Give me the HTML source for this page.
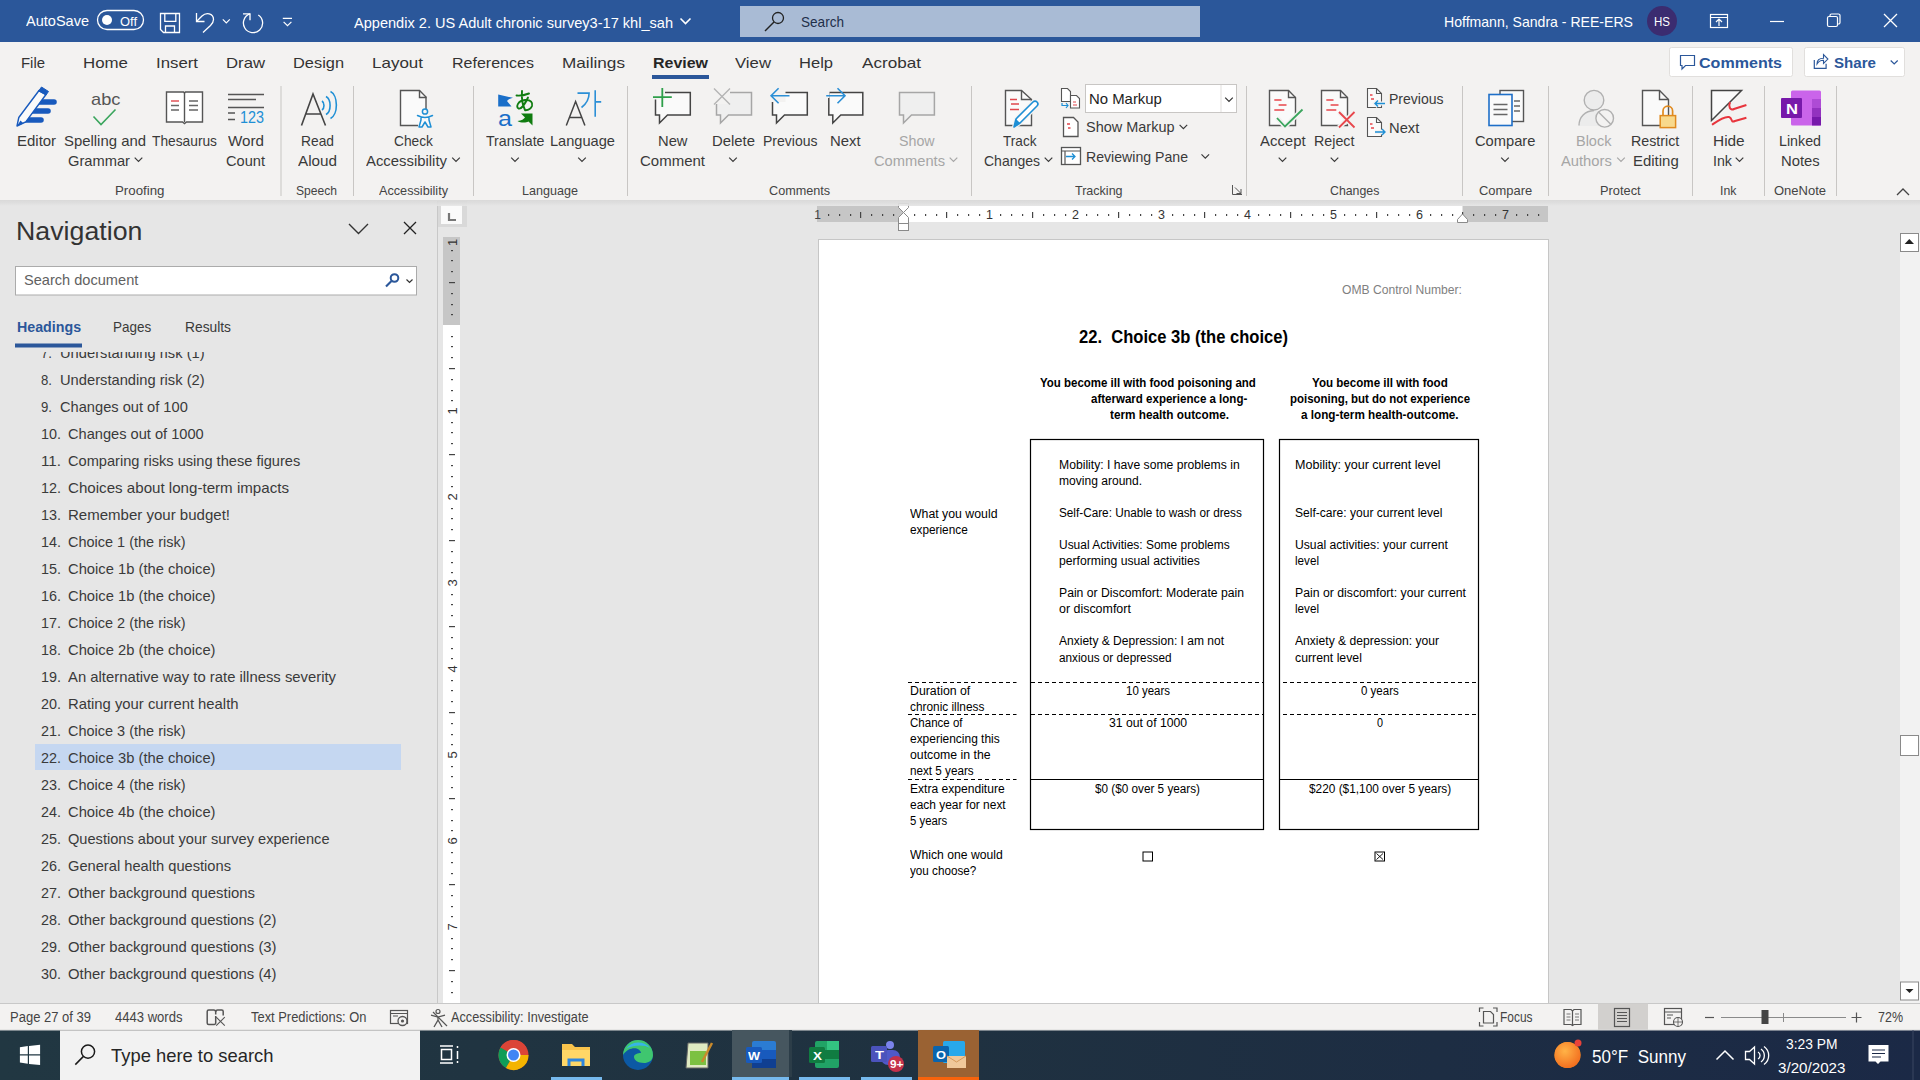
<!DOCTYPE html>
<html><head><meta charset="utf-8"><title>Word</title>
<style>
*{margin:0;padding:0}html,body{width:1920px;height:1080px;overflow:hidden;background:#e6e6e6}
.t{position:absolute;white-space:pre;line-height:1;transform-origin:0 0;font-family:"Liberation Sans",sans-serif}
svg.pg{position:absolute;left:0;top:0}
</style></head><body>
<svg class="pg" width="1920" height="1080" viewBox="0 0 1920 1080" shape-rendering="geometricPrecision">
<rect x="0" y="0" width="1920" height="43" fill="#2b579a"/>
<rect x="0" y="42" width="1920" height="160" fill="#f3f2f1"/>
<rect x="0" y="202" width="1920" height="801" fill="#e6e6e6"/>
<defs><linearGradient id="shd" x1="0" y1="0" x2="0" y2="1"><stop offset="0" stop-color="#d6d6d6"/><stop offset="1" stop-color="#e6e6e6"/></linearGradient></defs>
<rect x="97.5" y="10.5" width="46" height="19" rx="9.5" fill="none" stroke="#fff" stroke-width="1.3"/>
<circle cx="107" cy="20" r="5" fill="#fff"/>
<path d="M160.5 13.5 h19 v19 h-16 l-3 -3 z" fill="none" stroke="#fff" stroke-width="1.3"/>
<path d="M164.8 13.5 v7.8 h11 v-7.8 M165.5 32.5 v-6.5 h9 v6.5" fill="none" stroke="#fff" stroke-width="1.3"/>
<path d="M196.5 13 v8.5 h8" fill="none" stroke="#fff" stroke-width="1.3"/>
<path d="M197 21 L202 16 C206 12,213.5 13,213.5 19.5 C213.5 22,212 24,210.5 25.5 L203 32.5" fill="none" stroke="#fff" stroke-width="1.3"/>
<path d="M222.8 19.3 l3.5 3.5 l3.5 -3.5" fill="none" stroke="#fff" stroke-width="1.2"/>
<path d="M250 13.9 A9.6 9.6 0 1 0 258.3 15" fill="none" stroke="#fff" stroke-width="1.3"/>
<path d="M243 13.8 h7 v6.5" fill="none" stroke="#fff" stroke-width="1.3"/>
<path d="M282.8 18.4 h9.2 M283.6 21.8 l3.9 3.9 l3.9 -3.9" fill="none" stroke="#fff" stroke-width="1.2"/>
<path d="M680.5 18.5 l5 5 l5 -5" fill="none" stroke="#fff" stroke-width="1.6"/>
<rect x="740" y="6" width="460" height="31" fill="#a9bbd5"/>
<circle cx="778" cy="18" r="5.5" fill="none" stroke="#222" stroke-width="1.3"/>
<path d="M774 22 L765 31" stroke="#222" stroke-width="1.4"/>
<circle cx="1662" cy="21" r="15" fill="#3b2c70"/>
<rect x="1710.5" y="14.5" width="17" height="13" fill="none" stroke="#fff" stroke-width="1.2"/>
<path d="M1710.5 17.5 h17 M1719 26 v-7 M1716 22 l3 -3 l3 3" fill="none" stroke="#fff" stroke-width="1.2"/>
<path d="M1770 21.5 h14" stroke="#fff" stroke-width="1.2"/>
<rect x="1827.5" y="16.5" width="10" height="10" rx="1.5" fill="none" stroke="#fff" stroke-width="1.2"/>
<path d="M1830 16.5 v-1 a1.5 1.5 0 0 1 1.5 -1.5 h7 a1.5 1.5 0 0 1 1.5 1.5 v7 a1.5 1.5 0 0 1 -1.5 1.5 h-1" fill="none" stroke="#fff" stroke-width="1.2"/>
<path d="M1884 14 L1897 27 M1897 14 L1884 27" stroke="#fff" stroke-width="1.3"/>
<rect x="652" y="75" width="57" height="4" fill="#2b579a"/>
<rect x="1669.5" y="47.5" width="123" height="29" rx="2" fill="#fff" stroke="#e1dfdd"/>
<path d="M1680.5 55.5 h14 v10 h-9 l-3.5 3.5 v-3.5 h-1.5 z" fill="none" stroke="#2b579a" stroke-width="1.2"/>
<rect x="1804.5" y="47.5" width="100" height="29" rx="2" fill="#fff" stroke="#e1dfdd"/>
<path d="M1814.3 60 v8.4 h11.8 v-4.6" fill="none" stroke="#2b579a" stroke-width="1.2"/>
<path d="M1817 64 C1817 60.5,1819.5 58.3,1823.5 58.3 v-3.6 l4.4 4.4 l-4.4 4.4 v-3.2 C1820.5 60.3,1818.5 61.5,1817 64 z" fill="none" stroke="#2b579a" stroke-width="1.1"/>
<path d="M1890.7 60.5 l3.5 3.5 l3.5 -3.5" fill="none" stroke="#2b579a" stroke-width="1.2"/>
<rect x="280.5" y="86" width="1" height="110" fill="#c8c6c4"/>
<rect x="353.0" y="86" width="1" height="110" fill="#c8c6c4"/>
<rect x="473.0" y="86" width="1" height="110" fill="#c8c6c4"/>
<rect x="627.0" y="86" width="1" height="110" fill="#c8c6c4"/>
<rect x="971.0" y="86" width="1" height="110" fill="#c8c6c4"/>
<rect x="1246.0" y="86" width="1" height="110" fill="#c8c6c4"/>
<rect x="1462.0" y="86" width="1" height="110" fill="#c8c6c4"/>
<rect x="1548.0" y="86" width="1" height="110" fill="#c8c6c4"/>
<rect x="1692.0" y="86" width="1" height="110" fill="#c8c6c4"/>
<rect x="1764.0" y="86" width="1" height="110" fill="#c8c6c4"/>
<rect x="1836.0" y="86" width="1" height="110" fill="#c8c6c4"/>
<path d="M134.7 157.7 l3.8 3.8 l3.8 -3.8" fill="none" stroke="#3a3a3a" stroke-width="1.2"/>
<path d="M37 102 h17 M30.5 111 h17.5 M24 120 h17" stroke="#185abd" stroke-width="5.6" stroke-linecap="round"/>
<path d="M17 126 L18.8 117.5 L39 90.5 L46 94.5 L25.8 121.8 Z" fill="#fafafa" stroke="#185abd" stroke-width="1.4" stroke-linejoin="round"/>
<path d="M38.6 91 L41.5 87 L48.5 91.5 L46 95 Z" fill="#185abd" stroke="#185abd" stroke-width="1" stroke-linejoin="round"/>
<path d="M17 126 L20.5 120.5 L23.5 123.5 Z" fill="#185abd"/>
<path d="M93.5 116.5 L101 124.5 L115.5 109.5" fill="none" stroke="#3aa55d" stroke-width="1.6"/>
<path d="M166.5 92 h17 l1 1 l1 -1 h17 v30 h-16 l-2 1.5 l-2 -1.5 h-16 z" fill="#fff" stroke="#555" stroke-width="1.4"/>
<path d="M184.5 93 v29" stroke="#555" stroke-width="1.4"/>
<path d="M171 101 h8" stroke="#e0474c" stroke-width="1.4"/>
<path d="M171 105.5 h8 M171 110 h8 M189 101 h9 M189 105.5 h9 M189 110 h9" stroke="#666" stroke-width="1.4"/>
<path d="M228 94.5 h36 M228 99.5 h28 M228 107.5 h36 M228 113 h7 M228 119.5 h7" stroke="#555" stroke-width="1.4"/>
<path d="M301.5 125.5 L313 94 L325.5 125.5 M305.5 114 h15.5" fill="none" stroke="#444" stroke-width="1.6"/>
<path d="M322 101 a3.5 5 0 0 1 0 9 M326 96.5 a6 9.5 0 0 1 0 18 M330.5 91.5 a8 14 0 0 1 0 27" fill="none" stroke="#1e8fd5" stroke-width="1.6"/>
<path d="M452.2 157.7 l3.8 3.8 l3.8 -3.8" fill="none" stroke="#3a3a3a" stroke-width="1.2"/>
<path d="M418 125.5 h-17.5 v-35 h19 l6.5 6.5 v12" fill="#fafafa" stroke="#555" stroke-width="1.4"/>
<path d="M419.5 90.5 v7 h7" fill="none" stroke="#555" stroke-width="1.4"/>
<circle cx="425" cy="111.5" r="2.6" fill="none" stroke="#1e8fd5" stroke-width="1.5"/>
<path d="M417.5 115.5 c2 1 5 2 7.5 2 c2.5 0 5.5 -1 7.5 -2 M421 117 v3 l-2 7 h3 l3 -5 l3 5 h3 l-2 -7 v-3" fill="#fafafa" stroke="#1e8fd5" stroke-width="1.5" stroke-linejoin="round" stroke-linecap="round"/>
<path d="M511.2 157.7 l3.8 3.8 l3.8 -3.8" fill="none" stroke="#3a3a3a" stroke-width="1.2"/>
<path d="M578.2 157.7 l3.8 3.8 l3.8 -3.8" fill="none" stroke="#3a3a3a" stroke-width="1.2"/>
<path d="M498.2 94.5 L513 97.8 C510 98.5 508 99.5 507 101 L511.5 106.6 H498.2 Z" fill="#1a6fc9"/>
<path d="M516.5 95.5 C520 96 525 95 529 93.5 M522 91 C521.5 97 522 104 525 110 M528 97.5 C525 104 521 109.5 518.5 108.5 C515.5 107 518 100.5 525 100 C531 99.5 533 103 532 106 C531 108.5 528.5 110 525.5 110.3" fill="none" stroke="#107c10" stroke-width="1.9" stroke-linecap="round"/>
<path d="M521 113.5 H532.5 V125.5 L528.5 121.5 C525 123.5 520 122.5 517.5 121 C521.5 120.5 524 119 525 117.5 Z" fill="#107c10"/>
<path d="M566.3 125.5 L575.6 101.5 L584.9 125.5 M569.4 117.6 h12.4" fill="none" stroke="#444" stroke-width="1.5"/>
<path d="M577.5 93.1 h11.6 c0 6 -3 11 -7.6 14.4 M595.2 90.2 v26.6 M595.2 101.9 h6" fill="none" stroke="#2b8fd6" stroke-width="1.6"/>
<path d="M729.2 157.7 l3.8 3.8 l3.8 -3.8" fill="none" stroke="#3a3a3a" stroke-width="1.2"/>
<path d="M949.7 157.7 l3.8 3.8 l3.8 -3.8" fill="none" stroke="#a6a6a6" stroke-width="1.2"/>
<path d="M655.5 92.5 h34.799999999999955 v22.5 h-22.799999999999955 l-8 8 v-8 h-4 z" fill="#fafafa" stroke="#444" stroke-width="1.5" stroke-linejoin="miter"/>
<path d="M653 88 h12 v11.5 h-12 z" fill="#f3f2f1"/>
<path d="M653 97.2 h18.8 M662.3 88 v19" stroke="#2e9f4a" stroke-width="1.8"/>
<path d="M716.5 92.5 h35.0 v22.5 h-23.0 l-8 8 v-8 h-4 z" fill="#efefef" stroke="#a6a6a6" stroke-width="1.5" stroke-linejoin="miter"/>
<path d="M714 88 h16 v16 h-16 z" fill="#f3f2f1"/>
<path d="M714 88.5 L730 104.5 M730 88.5 L714 104.5" stroke="#b4b4b4" stroke-width="1.4"/>
<path d="M772.5 92.5 h34.799999999999955 v22.5 h-22.799999999999955 l-8 8 v-8 h-4 z" fill="#fafafa" stroke="#444" stroke-width="1.5" stroke-linejoin="miter"/>
<path d="M770.5 88 h15 v14 h-15 z" fill="#f3f2f1"/>
<path d="M789.5 95.7 h-18.5 M778.6 88.2 l-7.5 7.5 l7.5 7.5" fill="none" stroke="#2b8fd6" stroke-width="1.6"/>
<path d="M828.8 92.5 h34.0 v22.5 h-22.0 l-8 8 v-8 h-4 z" fill="#fafafa" stroke="#444" stroke-width="1.5" stroke-linejoin="miter"/>
<path d="M826 88 h19.5 v3 h-16 v7 h-3.5 z" fill="#f3f2f1"/>
<path d="M826.2 95.7 h19.3 M837.5 88.2 l7.5 7.5 l-7.5 7.5" fill="none" stroke="#2b8fd6" stroke-width="1.6"/>
<path d="M899.5 92.5 h34.89999999999998 v22.5 h-22.899999999999977 l-8 8 v-8 h-4 z" fill="#efefef" stroke="#a6a6a6" stroke-width="1.5" stroke-linejoin="miter"/>
<path d="M1044.7 157.7 l3.8 3.8 l3.8 -3.8" fill="none" stroke="#3a3a3a" stroke-width="1.2"/>
<path d="M1005.5 90.5 h16 l10 9 v26 h-26 z" fill="#fafafa" stroke="#555" stroke-width="1.4"/>
<path d="M1021.5 90.5 v9 h10" fill="none" stroke="#555" stroke-width="1.4"/>
<path d="M1010 99.5 h7 M1011 104 h8 M1010 109.5 h9" stroke="#e0474c" stroke-width="1.5"/>
<path d="M1014 127 L1016 119 L1033 102 a2.5 2.5 0 0 1 4 4 L1020 123 Z" fill="#fff" stroke="#f3f2f1" stroke-width="4" stroke-linejoin="round"/>
<path d="M1014 127 L1016 119 L1033 102 a2.5 2.5 0 0 1 4 4 L1020 123 Z" fill="#fff" stroke="#1e8fd5" stroke-width="1.6" stroke-linejoin="round"/>
<path d="M1014 127 L1016 119 L1020 123 Z" fill="#1e8fd5"/>
<rect x="1085.5" y="84.5" width="151" height="28" fill="#fff" stroke="#c8c6c4"/>
<rect x="1220.5" y="85" width="1" height="27" fill="#e1dfdd"/>
<path d="M1225.2 97.69999999999999 l3.8 3.8 l3.8 -3.8" fill="none" stroke="#333" stroke-width="1.2"/>
<path d="M1061.5 88.5 h6 l3 3 v10 h-9 z" fill="#fff" stroke="#555" stroke-width="1.1"/>
<path d="M1070.5 95.5 h6 l3 3 v9.5 h-9 z" fill="#fff" stroke="#555" stroke-width="1.1"/>
<path d="M1073 102 h3 M1073 105 h4" stroke="#e0474c" stroke-width="1.1"/>
<path d="M1062 103 v2.5 h6 M1066 103 l2 2.5 l-2 2.5" fill="none" stroke="#1e8fd5" stroke-width="1.2"/>
<path d="M1063.5 117.5 h10 l4.5 4.5 v14.5 h-14.5 z" fill="#fff" stroke="#555" stroke-width="1.3"/>
<path d="M1067 124 h3 M1068 128 h2.5" stroke="#e0474c" stroke-width="1.4"/>
<path d="M1179.6000000000001 124.89999999999999 l3.8 3.8 l3.8 -3.8" fill="none" stroke="#3a3a3a" stroke-width="1.2"/>
<rect x="1061.5" y="147.5" width="19" height="17" fill="#fff" stroke="#555" stroke-width="1.3"/>
<path d="M1061.5 151 h19 M1065 151 v13.5" stroke="#555" stroke-width="1.2"/>
<path d="M1066 156.5 h9 M1072 153.5 l3 3 l-3 3" fill="none" stroke="#1e8fd5" stroke-width="1.3"/>
<path d="M1201.5 154.29999999999998 l3.8 3.8 l3.8 -3.8" fill="none" stroke="#3a3a3a" stroke-width="1.2"/>
<path d="M1232.5 185.5 h9 v9 h-9 z" fill="none" stroke="#666" stroke-width="0.0"/>
<path d="M1232.5 185 v9.5 h9.5 M1235 187.5 l6 6 M1241 189 v4.5 h-4.5" fill="none" stroke="#555" stroke-width="1"/>
<path d="M1278.7 157.7 l3.8 3.8 l3.8 -3.8" fill="none" stroke="#3a3a3a" stroke-width="1.2"/>
<path d="M1330.7 157.7 l3.8 3.8 l3.8 -3.8" fill="none" stroke="#3a3a3a" stroke-width="1.2"/>
<path d="M1269.5 90.5 h19 l7 7 v28 h-26 z" fill="#fafafa" stroke="#555" stroke-width="1.4" stroke-linejoin="miter"/>
<path d="M1288.5 90.5 v7 h7" fill="none" stroke="#555" stroke-width="1.4"/>
<path d="M1274.3 100 h7.2 M1278.6 105 h7.9 M1274.3 110 h10" stroke="#e8474c" stroke-width="1.6"/>
<path d="M1277 118 L1285 126.5 L1302.5 109.5" fill="none" stroke="#f3f2f1" stroke-width="5"/>
<path d="M1277 118 L1285 126.5 L1302.5 109.5" fill="none" stroke="#3aa55d" stroke-width="1.8"/>
<path d="M1321.5 90.5 h19 l7 7 v28 h-26 z" fill="#fafafa" stroke="#555" stroke-width="1.4" stroke-linejoin="miter"/>
<path d="M1340.5 90.5 v7 h7" fill="none" stroke="#555" stroke-width="1.4"/>
<path d="M1326.3 100 h7.2 M1330.6 105 h7.9 M1326.3 110 h10" stroke="#e8474c" stroke-width="1.6"/>
<path d="M1339 112 L1354.5 127.5 M1354.5 112 L1339 127.5" stroke="#f3f2f1" stroke-width="5"/>
<path d="M1339 112 L1354.5 127.5 M1354.5 112 L1339 127.5" stroke="#e8474c" stroke-width="1.8"/>
<path d="M1367.5 88.5 h9 l5 5 v14 h-14 z" fill="#fafafa" stroke="#555" stroke-width="1.1" stroke-linejoin="miter"/>
<path d="M1376.5 88.5 v5 h5" fill="none" stroke="#555" stroke-width="1.1"/>
<path d="M1370 95 h2.5 M1371 99 h3" stroke="#e8474c" stroke-width="1.3"/>
<path d="M1385 103.5 h-10 M1378 100.5 l-3 3 l3 3" fill="none" stroke="#f3f2f1" stroke-width="4"/>
<path d="M1385 103.5 h-10 M1378 100.5 l-3 3 l3 3" fill="none" stroke="#1e8fd5" stroke-width="1.4"/>
<path d="M1367.5 117.5 h9 l5 5 v14 h-14 z" fill="#fafafa" stroke="#555" stroke-width="1.1" stroke-linejoin="miter"/>
<path d="M1376.5 117.5 v5 h5" fill="none" stroke="#555" stroke-width="1.1"/>
<path d="M1370 124 h2.5 M1371 128 h3" stroke="#e8474c" stroke-width="1.3"/>
<path d="M1375 132 h10 M1382 129 l3 3 l-3 3" fill="none" stroke="#f3f2f1" stroke-width="4"/>
<path d="M1375 132 h10 M1382 129 l3 3 l-3 3" fill="none" stroke="#1e8fd5" stroke-width="1.4"/>
<path d="M1501.2 157.7 l3.8 3.8 l3.8 -3.8" fill="none" stroke="#3a3a3a" stroke-width="1.2"/>
<rect x="1500" y="90.5" width="23.5" height="31" fill="#fafafa" stroke="#555" stroke-width="1.4"/>
<path d="M1514 101 h6 M1514 106 h6 M1514 111 h6" stroke="#666" stroke-width="1.4"/>
<rect x="1489" y="94.5" width="23" height="31" fill="#fafafa" stroke="#1e6fc8" stroke-width="1.6"/>
<path d="M1493.5 104.5 h14 M1493.5 109.5 h14 M1493.5 114.5 h14" stroke="#666" stroke-width="1.4"/>
<path d="M1617.2 157.7 l3.8 3.8 l3.8 -3.8" fill="none" stroke="#a6a6a6" stroke-width="1.2"/>
<path d="M1579 126 C1579 117,1585 111,1594 110.5 C1600 110.5,1604 113,1606 116 L1606 126 Z" fill="#ececec" stroke="none"/>
<path d="M1579 125.5 C1579 117,1585 111,1594 110.5" fill="none" stroke="#b0b0b0" stroke-width="1.4"/>
<circle cx="1594" cy="100.2" r="9.8" fill="#ececec" stroke="#b0b0b0" stroke-width="1.4"/>
<circle cx="1604.7" cy="118.3" r="8.8" fill="#f3f2f1" stroke="#b0b0b0" stroke-width="1.4"/>
<path d="M1598.5 112 L1611 124.5" stroke="#b0b0b0" stroke-width="1.4"/>
<path d="M1642.5 90.5 h17 l9 9 v26 h-26 z" fill="#fafafa" stroke="#555" stroke-width="1.4" stroke-linejoin="miter"/>
<path d="M1659.5 90.5 v9 h9" fill="none" stroke="#555" stroke-width="1.4"/>
<path d="M1663 115.5 v-4.5 a4.8 4.8 0 0 1 9.6 0 v4.5" fill="none" stroke="#e08a1e" stroke-width="1.7"/>
<rect x="1660.2" y="115.6" width="15.4" height="12" fill="#f8d98c" stroke="#e08a1e" stroke-width="1.5"/>
<path d="M1735.7 157.7 l3.8 3.8 l3.8 -3.8" fill="none" stroke="#3a3a3a" stroke-width="1.2"/>
<path d="M1711.5 90.5 h30 l-30 30 z" fill="#fafafa" stroke="#444" stroke-width="1.5" stroke-linejoin="miter"/>
<path d="M1730.2 102.3 C1728 106,1730 111,1734 109 L1746.4 105 M1712 124.8 C1716 122,1724 116,1729 117 C1733 118,1730 123,1735 121 L1746.4 117.8" fill="none" stroke="#e8353d" stroke-width="2"/>
<rect x="1791" y="90.5" width="30" height="35" rx="1.5" fill="#ca64ea"/>
<rect x="1812" y="99" width="9" height="9" fill="#ae4bd5"/>
<rect x="1812" y="108" width="9" height="9" fill="#9332bf"/>
<rect x="1812" y="117" width="9" height="8.5" fill="#7719aa"/>
<rect x="1781" y="98" width="21" height="20" rx="1" fill="#7719aa"/>
<path d="M1897 195 l6 -6 l6 6" fill="none" stroke="#444" stroke-width="1.3"/>
<rect x="437" y="201" width="1" height="802" fill="#c8c8c8"/>
<path d="M349 224 l9.5 9.5 l9.5 -9.5" fill="none" stroke="#333" stroke-width="1.4"/>
<path d="M404 222 L416 234 M416 222 L404 234" stroke="#222" stroke-width="1.3"/>
<rect x="15.5" y="266.5" width="401" height="28.5" fill="#fff" stroke="#ababab"/>
<circle cx="394.5" cy="278" r="3.8" fill="none" stroke="#2b579a" stroke-width="2"/>
<path d="M391.5 281 L386 286.5" stroke="#2b579a" stroke-width="2.2"/>
<path d="M406.5 279.5 l3 3 l3 -3" fill="none" stroke="#333" stroke-width="1.2"/>
<rect x="15" y="343.5" width="67" height="4" fill="#2b579a"/>
<rect x="35" y="744" width="366" height="26" fill="#c5d7f1"/>
<rect x="438" y="201" width="29" height="26" fill="#d9d9d9"/>
<rect x="441" y="204.5" width="21" height="19.5" fill="#fafafa"/>
<path d="M449 213 v7 h7" fill="none" stroke="#777" stroke-width="2.2"/>
<rect x="443" y="237" width="17" height="88" fill="#c6c6c6"/>
<rect x="443" y="325" width="17" height="678" fill="#fff"/>
<rect x="451" y="250" width="2" height="1.2" fill="#444"/><rect x="451" y="260" width="2" height="1.2" fill="#444"/><rect x="451" y="271" width="2" height="1.2" fill="#444"/><rect x="449" y="282" width="6" height="1.2" fill="#444"/><rect x="451" y="293" width="2" height="1.2" fill="#444"/><rect x="451" y="304" width="2" height="1.2" fill="#444"/><rect x="451" y="314" width="2" height="1.2" fill="#444"/><rect x="451" y="336" width="2" height="1.2" fill="#444"/><rect x="451" y="346" width="2" height="1.2" fill="#444"/><rect x="451" y="357" width="2" height="1.2" fill="#444"/><rect x="449" y="368" width="6" height="1.2" fill="#444"/><rect x="451" y="379" width="2" height="1.2" fill="#444"/><rect x="451" y="390" width="2" height="1.2" fill="#444"/><rect x="451" y="400" width="2" height="1.2" fill="#444"/><rect x="451" y="422" width="2" height="1.2" fill="#444"/><rect x="451" y="432" width="2" height="1.2" fill="#444"/><rect x="451" y="443" width="2" height="1.2" fill="#444"/><rect x="449" y="454" width="6" height="1.2" fill="#444"/><rect x="451" y="465" width="2" height="1.2" fill="#444"/><rect x="451" y="476" width="2" height="1.2" fill="#444"/><rect x="451" y="486" width="2" height="1.2" fill="#444"/><rect x="451" y="508" width="2" height="1.2" fill="#444"/><rect x="451" y="518" width="2" height="1.2" fill="#444"/><rect x="451" y="529" width="2" height="1.2" fill="#444"/><rect x="449" y="540" width="6" height="1.2" fill="#444"/><rect x="451" y="551" width="2" height="1.2" fill="#444"/><rect x="451" y="562" width="2" height="1.2" fill="#444"/><rect x="451" y="572" width="2" height="1.2" fill="#444"/><rect x="451" y="594" width="2" height="1.2" fill="#444"/><rect x="451" y="604" width="2" height="1.2" fill="#444"/><rect x="451" y="615" width="2" height="1.2" fill="#444"/><rect x="449" y="626" width="6" height="1.2" fill="#444"/><rect x="451" y="637" width="2" height="1.2" fill="#444"/><rect x="451" y="648" width="2" height="1.2" fill="#444"/><rect x="451" y="658" width="2" height="1.2" fill="#444"/><rect x="451" y="680" width="2" height="1.2" fill="#444"/><rect x="451" y="690" width="2" height="1.2" fill="#444"/><rect x="451" y="701" width="2" height="1.2" fill="#444"/><rect x="449" y="712" width="6" height="1.2" fill="#444"/><rect x="451" y="723" width="2" height="1.2" fill="#444"/><rect x="451" y="734" width="2" height="1.2" fill="#444"/><rect x="451" y="744" width="2" height="1.2" fill="#444"/><rect x="451" y="766" width="2" height="1.2" fill="#444"/><rect x="451" y="776" width="2" height="1.2" fill="#444"/><rect x="451" y="787" width="2" height="1.2" fill="#444"/><rect x="449" y="798" width="6" height="1.2" fill="#444"/><rect x="451" y="809" width="2" height="1.2" fill="#444"/><rect x="451" y="820" width="2" height="1.2" fill="#444"/><rect x="451" y="830" width="2" height="1.2" fill="#444"/><rect x="451" y="852" width="2" height="1.2" fill="#444"/><rect x="451" y="862" width="2" height="1.2" fill="#444"/><rect x="451" y="873" width="2" height="1.2" fill="#444"/><rect x="449" y="884" width="6" height="1.2" fill="#444"/><rect x="451" y="895" width="2" height="1.2" fill="#444"/><rect x="451" y="906" width="2" height="1.2" fill="#444"/><rect x="451" y="916" width="2" height="1.2" fill="#444"/><rect x="451" y="938" width="2" height="1.2" fill="#444"/><rect x="451" y="948" width="2" height="1.2" fill="#444"/><rect x="451" y="959" width="2" height="1.2" fill="#444"/><rect x="449" y="970" width="6" height="1.2" fill="#444"/><rect x="451" y="981" width="2" height="1.2" fill="#444"/><rect x="451" y="992" width="2" height="1.2" fill="#444"/>
<text x="0" y="0" transform="translate(457 411.0) rotate(-90)" font-family="Liberation Sans" font-size="13" fill="#333" text-anchor="middle">1</text>
<text x="0" y="0" transform="translate(457 497.0) rotate(-90)" font-family="Liberation Sans" font-size="13" fill="#333" text-anchor="middle">2</text>
<text x="0" y="0" transform="translate(457 583.0) rotate(-90)" font-family="Liberation Sans" font-size="13" fill="#333" text-anchor="middle">3</text>
<text x="0" y="0" transform="translate(457 669.0) rotate(-90)" font-family="Liberation Sans" font-size="13" fill="#333" text-anchor="middle">4</text>
<text x="0" y="0" transform="translate(457 755.0) rotate(-90)" font-family="Liberation Sans" font-size="13" fill="#333" text-anchor="middle">5</text>
<text x="0" y="0" transform="translate(457 841.0) rotate(-90)" font-family="Liberation Sans" font-size="13" fill="#333" text-anchor="middle">6</text>
<text x="0" y="0" transform="translate(457 927.0) rotate(-90)" font-family="Liberation Sans" font-size="13" fill="#333" text-anchor="middle">7</text>
<text x="0" y="0" transform="translate(457 242.5) rotate(-90)" font-family="Liberation Sans" font-size="13" fill="#333" text-anchor="middle">1</text>
<rect x="817" y="206" width="731" height="16" fill="#c6c6c6"/>
<rect x="903.5" y="206" width="559" height="16" fill="#fff"/>
<rect x="828" y="214" width="1.2" height="2" fill="#444"/><rect x="839" y="214" width="1.2" height="2" fill="#444"/><rect x="850" y="214" width="1.2" height="2" fill="#444"/><rect x="860" y="212" width="1.2" height="6" fill="#444"/><rect x="871" y="214" width="1.2" height="2" fill="#444"/><rect x="882" y="214" width="1.2" height="2" fill="#444"/><rect x="893" y="214" width="1.2" height="2" fill="#444"/><rect x="914" y="214" width="1.2" height="2" fill="#444"/><rect x="925" y="214" width="1.2" height="2" fill="#444"/><rect x="936" y="214" width="1.2" height="2" fill="#444"/><rect x="946" y="212" width="1.2" height="6" fill="#444"/><rect x="957" y="214" width="1.2" height="2" fill="#444"/><rect x="968" y="214" width="1.2" height="2" fill="#444"/><rect x="979" y="214" width="1.2" height="2" fill="#444"/><rect x="1000" y="214" width="1.2" height="2" fill="#444"/><rect x="1011" y="214" width="1.2" height="2" fill="#444"/><rect x="1022" y="214" width="1.2" height="2" fill="#444"/><rect x="1032" y="212" width="1.2" height="6" fill="#444"/><rect x="1043" y="214" width="1.2" height="2" fill="#444"/><rect x="1054" y="214" width="1.2" height="2" fill="#444"/><rect x="1065" y="214" width="1.2" height="2" fill="#444"/><rect x="1086" y="214" width="1.2" height="2" fill="#444"/><rect x="1097" y="214" width="1.2" height="2" fill="#444"/><rect x="1108" y="214" width="1.2" height="2" fill="#444"/><rect x="1118" y="212" width="1.2" height="6" fill="#444"/><rect x="1129" y="214" width="1.2" height="2" fill="#444"/><rect x="1140" y="214" width="1.2" height="2" fill="#444"/><rect x="1151" y="214" width="1.2" height="2" fill="#444"/><rect x="1172" y="214" width="1.2" height="2" fill="#444"/><rect x="1183" y="214" width="1.2" height="2" fill="#444"/><rect x="1194" y="214" width="1.2" height="2" fill="#444"/><rect x="1204" y="212" width="1.2" height="6" fill="#444"/><rect x="1215" y="214" width="1.2" height="2" fill="#444"/><rect x="1226" y="214" width="1.2" height="2" fill="#444"/><rect x="1237" y="214" width="1.2" height="2" fill="#444"/><rect x="1258" y="214" width="1.2" height="2" fill="#444"/><rect x="1269" y="214" width="1.2" height="2" fill="#444"/><rect x="1280" y="214" width="1.2" height="2" fill="#444"/><rect x="1290" y="212" width="1.2" height="6" fill="#444"/><rect x="1301" y="214" width="1.2" height="2" fill="#444"/><rect x="1312" y="214" width="1.2" height="2" fill="#444"/><rect x="1323" y="214" width="1.2" height="2" fill="#444"/><rect x="1344" y="214" width="1.2" height="2" fill="#444"/><rect x="1355" y="214" width="1.2" height="2" fill="#444"/><rect x="1366" y="214" width="1.2" height="2" fill="#444"/><rect x="1376" y="212" width="1.2" height="6" fill="#444"/><rect x="1387" y="214" width="1.2" height="2" fill="#444"/><rect x="1398" y="214" width="1.2" height="2" fill="#444"/><rect x="1409" y="214" width="1.2" height="2" fill="#444"/><rect x="1430" y="214" width="1.2" height="2" fill="#444"/><rect x="1441" y="214" width="1.2" height="2" fill="#444"/><rect x="1452" y="214" width="1.2" height="2" fill="#444"/><rect x="1462" y="212" width="1.2" height="6" fill="#444"/><rect x="1473" y="214" width="1.2" height="2" fill="#444"/><rect x="1484" y="214" width="1.2" height="2" fill="#444"/><rect x="1495" y="214" width="1.2" height="2" fill="#444"/><rect x="1516" y="214" width="1.2" height="2" fill="#444"/><rect x="1527" y="214" width="1.2" height="2" fill="#444"/><rect x="1538" y="214" width="1.2" height="2" fill="#444"/>
<text x="989.5" y="218.7" font-family="Liberation Sans" font-size="12.5" fill="#333" text-anchor="middle">1</text>
<text x="1075.5" y="218.7" font-family="Liberation Sans" font-size="12.5" fill="#333" text-anchor="middle">2</text>
<text x="1161.5" y="218.7" font-family="Liberation Sans" font-size="12.5" fill="#333" text-anchor="middle">3</text>
<text x="1247.5" y="218.7" font-family="Liberation Sans" font-size="12.5" fill="#333" text-anchor="middle">4</text>
<text x="1333.5" y="218.7" font-family="Liberation Sans" font-size="12.5" fill="#333" text-anchor="middle">5</text>
<text x="1419.5" y="218.7" font-family="Liberation Sans" font-size="12.5" fill="#333" text-anchor="middle">6</text>
<text x="1505.5" y="218.7" font-family="Liberation Sans" font-size="12.5" fill="#333" text-anchor="middle">7</text>
<text x="817.5" y="218.7" font-family="Liberation Sans" font-size="12" fill="#444" text-anchor="middle">1</text>
<path d="M898.5 203.5 h10 v4 l-5 5 l-5 -5 z" fill="#fff" stroke="#8a8a8a"/>
<path d="M903.5 212.5 l5 5 v6 h-10 v-6 z" fill="#fff" stroke="#8a8a8a"/>
<rect x="898.5" y="223.5" width="10" height="7" fill="#fff" stroke="#8a8a8a"/>
<path d="M1462.5 214 l5 5.5 v3 h-10 v-3 z" fill="#fff" stroke="#8a8a8a"/>
<rect x="818.5" y="239.5" width="730" height="770" fill="#fff" stroke="#c6c6c6"/>
<rect x="1900" y="233" width="20" height="770" fill="#f2f2f2"/>
<rect x="1900.5" y="233.5" width="18" height="18" fill="#fff" stroke="#8a8a8a"/>
<path d="M1904.6 244 L1909.3 239 L1914 244 z" fill="#222"/>
<rect x="1900.5" y="735.5" width="18" height="20" fill="#fff" stroke="#8a8a8a"/>
<rect x="1900.5" y="982" width="18" height="18" fill="#fff" stroke="#8a8a8a"/>
<path d="M1905.5 989 l4 4 l4 -4 z" fill="#222"/>
<rect x="1030.5" y="439.5" width="233" height="390" fill="none" stroke="#000" stroke-width="1.2"/>
<rect x="1279.5" y="439.5" width="199" height="390" fill="none" stroke="#000" stroke-width="1.2"/>
<path d="M1030.5 779.5 h233 M1279.5 779.5 h199" stroke="#000" stroke-width="1.2"/>
<path d="M908 682.5 h108.5 M1031 682.5 h233 M1283 682.5 h196" stroke="#000" stroke-width="1.2" stroke-dasharray="4 3"/>
<path d="M908 714.5 h108.5 M1031 714.5 h233 M1283 714.5 h196" stroke="#000" stroke-width="1.2" stroke-dasharray="4 3"/>
<path d="M908 779.5 h108.5" stroke="#000" stroke-width="1.2" stroke-dasharray="4 3"/>
<rect x="1143" y="852" width="9.5" height="9" fill="none" stroke="#000" stroke-width="1"/>
<rect x="1375" y="852" width="9.5" height="9" fill="none" stroke="#000" stroke-width="1"/>
<path d="M1376.5 853.5 l6.5 6 M1383 853.5 l-6.5 6" stroke="#000" stroke-width="0.9"/>
<rect x="0" y="200" width="1920" height="6" fill="url(#shd)" opacity="0.9"/>
<rect x="0" y="1003" width="1920" height="27" fill="#f3f2f1"/>
<rect x="0" y="1003" width="1920" height="1" fill="#c8c8c8"/>
<path d="M215.7 1016 v7 a1.5 1.5 0 0 1 -1.5 1.5 h-5.5 a1.5 1.5 0 0 1 -1.5 -1.5 v-11.5 a1.5 1.5 0 0 1 1.5 -1.5 h5 a2 2 0 0 1 2 2 v2.5" fill="none" stroke="#555" stroke-width="1.5"/>
<path d="M215.7 1012 a2 2 0 0 1 2 -2 h4 a1.5 1.5 0 0 1 1.5 1.5 v4" fill="none" stroke="#555" stroke-width="1.5"/>
<path d="M216.2 1017.2 l8.6 8.4 M224.8 1017.2 l-8.6 8.4" stroke="#555" stroke-width="1.1"/>
<rect x="390.5" y="1010.5" width="17" height="13" fill="none" stroke="#555" stroke-width="1.2"/>
<path d="M390.5 1013.5 h17 M393 1016 h5" stroke="#555" stroke-width="1.2"/>
<circle cx="402.5" cy="1021" r="4.5" fill="#f3f2f1" stroke="#555" stroke-width="1.3"/><circle cx="402.5" cy="1021" r="1.6" fill="#555"/>
<circle cx="438" cy="1011.5" r="2" fill="none" stroke="#555" stroke-width="1.2"/>
<path d="M431 1015 l7 2 l7 -2 M438 1017 v3 l-4 7 M438 1020 l4 7" fill="none" stroke="#555" stroke-width="1.3"/>
<path d="M433 1012 L447 1026" stroke="#555" stroke-width="1.2"/>
<path d="M1479.5 1012 v-4 h4 M1497 1012 v-4 h-4 M1479.5 1022 v4 h4 M1497 1022 v4 h-4" fill="none" stroke="#555" stroke-width="1.2"/>
<path d="M1483.5 1011.5 h7 l3 3 v8.5 h-10 z" fill="none" stroke="#555" stroke-width="1.2"/>
<path d="M1564 1009.5 h7 l1.5 1.5 l1.5 -1.5 h7 v15 h-7 l-1.5 1 l-1.5 -1 h-7 z M1572.5 1011 v14" fill="none" stroke="#555" stroke-width="1.2"/>
<path d="M1566.5 1014 h4 M1566.5 1017 h4 M1566.5 1020 h4 M1575 1014 h4 M1575 1017 h4 M1575 1020 h4" stroke="#777" stroke-width="1"/>
<rect x="1598" y="1003.5" width="50" height="26.5" fill="#d2d0ce"/>
<rect x="1614.5" y="1008.5" width="15" height="18" fill="none" stroke="#555" stroke-width="1.2"/>
<path d="M1617 1012.5 h10 M1617 1015.5 h10 M1617 1018.5 h10 M1617 1021.5 h10" stroke="#555" stroke-width="1.1"/>
<rect x="1664.5" y="1008.5" width="17" height="16" fill="none" stroke="#555" stroke-width="1.2"/>
<path d="M1664.5 1012 h17 M1667 1015 h6 M1667 1018 h4" stroke="#555" stroke-width="1.1"/>
<circle cx="1678" cy="1022" r="4.5" fill="#f3f2f1" stroke="#555" stroke-width="1.1"/>
<path d="M1673.5 1022 h9 M1678 1017.5 v9" stroke="#555" stroke-width="0.8"/>
<path d="M1705 1017.5 h9" stroke="#555" stroke-width="1.2"/>
<rect x="1721" y="1017" width="125" height="1" fill="#8a8a8a"/>
<rect x="1783" y="1013" width="1" height="9" fill="#8a8a8a"/>
<rect x="1761.5" y="1010" width="7" height="14" fill="#444"/>
<path d="M1851.5 1017.5 h10 M1856.5 1012.5 v10" stroke="#555" stroke-width="1.2"/>
<defs><linearGradient id="tbg" x1="0" y1="0" x2="1" y2="0"><stop offset="0" stop-color="#213742"/><stop offset="0.5" stop-color="#1f3140"/><stop offset="1" stop-color="#1b2946"/></linearGradient></defs>
<rect x="0" y="1030" width="1920" height="50" fill="url(#tbg)"/>
<rect x="0" y="1029.5" width="1920" height="1" fill="#d9d9d9"/>
<path d="M19.9 1047.3 L27.8 1046.1 V1054.3 H19.9 Z M29 1045.9 L40.1 1044.7 V1054.3 H29 Z M19.9 1055.4 H27.8 V1063.7 L19.9 1062.6 Z M29 1055.4 H40.1 V1065.1 L29 1063.9 Z" fill="#fff"/>
<rect x="60" y="1030" width="360" height="50" fill="#f2f2f2"/>
<circle cx="88" cy="1051.6" r="6.6" fill="none" stroke="#1a1a1a" stroke-width="1.5"/>
<path d="M83.2 1056.6 L75.3 1064.6" stroke="#1a1a1a" stroke-width="1.5"/>
<rect x="60" y="1030" width="360" height="1" fill="#c4c4c4"/>
<path d="M440 1046 h13 M440 1063 h13 M441.5 1049.5 h10 v10 h-10 z M457.5 1046 v2 M457.5 1051 v8 M457.5 1061 v2" fill="none" stroke="#fff" stroke-width="1.5"/>
<circle cx="513.5" cy="1055" r="15" fill="#db4437"/>
<path d="M513.5 1055 L500.5 1047.5 A15 15 0 0 0 506 1068 Z" fill="#0f9d58"/>
<path d="M513.5 1055 L506 1068 A15 15 0 0 0 528.5 1055 Z" fill="#f4b400"/>
<path d="M500.5 1047.5 A15 15 0 0 1 526.5 1047.5 L513.5 1047.5 Z" fill="#db4437"/>
<circle cx="513.5" cy="1055" r="7" fill="#fff"/><circle cx="513.5" cy="1055" r="5.5" fill="#4285f4"/>
<path d="M562 1044 h10 l3 3 h15 v19 h-28 z" fill="#f8c34c"/>
<rect x="562" y="1050" width="28" height="16" fill="#ffd767"/>
<path d="M569 1066 v-6 h14 v6" fill="none" stroke="#2e86de" stroke-width="3"/>
<rect x="551" y="1077" width="51" height="3" fill="#76b9ed"/>
<circle cx="638" cy="1055" r="15" fill="#0c59a4"/>
<path d="M623 1055 A15 15 0 0 1 653 1055 c0 6 -5 8 -9 8 c-6 0 -10 -3 -10 -6 c0 -3 4 -4 7 -4 c-1 -6 -12 -7 -18 2z" fill="#3fc66f"/>
<path d="M626 1049 A15 15 0 0 1 650 1048 c-6 -4 -18 -3 -24 1z" fill="#37b4e8"/>
<path d="M688 1043 h20 v25 h-22 z" fill="#dfeac2" stroke="#666" stroke-width="1"/>
<path d="M690 1051 h16 v14 h-16 z" fill="#7cc142"/>
<path d="M702 1062 l10 -19" stroke="#c98a2b" stroke-width="2.5"/>
<rect x="732" y="1030" width="57" height="50" fill="#46565f"/>
<rect x="732" y="1077" width="57" height="3" fill="#76b9ed"/>
<rect x="789" y="1030" width="3" height="47" fill="#2c3d48"/>
<rect x="752" y="1041" width="24" height="27" rx="2" fill="#2b7cd3"/>
<rect x="752" y="1050" width="24" height="9" fill="#185abd"/><rect x="752" y="1059" width="24" height="9" fill="#103f91"/>
<rect x="746" y="1047" width="16" height="16" rx="1.5" fill="#185abd"/>
<rect x="815" y="1041" width="24" height="27" rx="2" fill="#21a366"/>
<rect x="815" y="1050" width="24" height="9" fill="#107c41"/><rect x="827" y="1041" width="12" height="9" fill="#33c481"/>
<rect x="809" y="1047" width="16" height="16" rx="1.5" fill="#107c41"/>
<rect x="799" y="1077" width="51" height="3" fill="#76b9ed"/>
<circle cx="890" cy="1045" r="4" fill="#7b83eb"/><rect x="881" y="1050" width="19" height="15" rx="7" fill="#5059c9"/>
<rect x="871" y="1046" width="16" height="16" rx="1.5" fill="#4b53bc"/>
<circle cx="896" cy="1064" r="8" fill="#c4314b"/>
<rect x="861" y="1077" width="51" height="3" fill="#76b9ed"/>
<rect x="918" y="1030" width="61" height="50" fill="#9a6233"/>
<rect x="918" y="1077" width="61" height="3" fill="#f7630c"/>
<rect x="943" y="1041" width="22" height="22" rx="1.5" fill="#28a8ea"/>
<rect x="933" y="1046" width="16" height="16" rx="1.5" fill="#0a64ad"/>
<rect x="947" y="1056" width="19" height="12" fill="#f0c89a"/>
<path d="M947 1056 l9.5 6 l9.5 -6" fill="none" stroke="#d69a5c" stroke-width="1"/>
<circle cx="1567.5" cy="1055" r="13" fill="#f7941d"/>
<circle cx="1567.5" cy="1055" r="13" fill="url(#sun)"/>
<defs><radialGradient id="sun" cx="0.4" cy="0.35" r="0.7"><stop offset="0" stop-color="#ffb347"/><stop offset="1" stop-color="#f26b1d"/></radialGradient></defs>
<circle cx="1578" cy="1043" r="3.5" fill="#e8423a"/>
<path d="M1716.5 1059.5 l8.5 -8.5 l8.5 8.5" fill="none" stroke="#fff" stroke-width="1.5"/>
<path d="M1745.5 1051.5 h4 l5 -4.5 v17 l-5 -4.5 h-4 z" fill="none" stroke="#fff" stroke-width="1.3"/>
<path d="M1758 1052 a4 4 0 0 1 0 7 M1761 1049 a8 8 0 0 1 0 13 M1764 1046.5 a11 11 0 0 1 0 18" fill="none" stroke="#fff" stroke-width="1.3"/>
<path d="M1868.5 1045 h20 v16.5 h-8 l-2.5 2.5 l-2.5 -2.5 h-7 z" fill="#fff"/>
<path d="M1872 1050 h13 M1872 1053.5 h13 M1872 1057 h9" stroke="#1b2946" stroke-width="1.1"/>
<rect x="1912.5" y="1030" width="1" height="50" fill="#3b4660"/>
</svg>
<span class="t" style="left:26.00px;top:13.00px;font-size:15px;color:#ffffff;transform:scaleX(0.9685)">AutoSave</span>
<span class="t" style="left:120.00px;top:15.00px;font-size:13px;color:#ffffff;transform:scaleX(0.9936)">Off</span>
<span class="t" style="left:354.00px;top:15.00px;font-size:15px;color:#ffffff;transform:scaleX(0.9710)">Appendix 2. US Adult chronic survey3-17 khl_sah</span>
<span class="t" style="left:801.00px;top:14.00px;font-size:15px;color:#1f2f4a;transform:scaleX(0.9047)">Search</span>
<span class="t" style="left:1444.00px;top:14.00px;font-size:15px;color:#ffffff;transform:scaleX(0.9380)">Hoffmann, Sandra - REE-ERS</span>
<span class="t" style="left:1654.00px;top:16.00px;font-size:12px;color:#ffffff;transform:scaleX(0.9597)">HS</span>
<span class="t" style="left:21.00px;top:55.00px;font-size:15px;color:#333333;transform:scaleX(0.9929)">File</span>
<span class="t" style="left:82.50px;top:55.00px;font-size:15px;color:#333333;transform:scaleX(1.1246)">Home</span>
<span class="t" style="left:156.00px;top:55.00px;font-size:15px;color:#333333;transform:scaleX(1.1195)">Insert</span>
<span class="t" style="left:226.00px;top:55.00px;font-size:15px;color:#333333;transform:scaleX(1.1138)">Draw</span>
<span class="t" style="left:293.00px;top:55.00px;font-size:15px;color:#333333;transform:scaleX(1.0920)">Design</span>
<span class="t" style="left:372.00px;top:55.00px;font-size:15px;color:#333333;transform:scaleX(1.1322)">Layout</span>
<span class="t" style="left:452.00px;top:55.00px;font-size:15px;color:#333333;transform:scaleX(1.0688)">References</span>
<span class="t" style="left:562.00px;top:55.00px;font-size:15px;color:#333333;transform:scaleX(1.1448)">Mailings</span>
<span class="t" style="left:735.00px;top:55.00px;font-size:15px;color:#333333;transform:scaleX(1.1163)">View</span>
<span class="t" style="left:799.00px;top:55.00px;font-size:15px;color:#333333;transform:scaleX(1.1018)">Help</span>
<span class="t" style="left:862.00px;top:55.00px;font-size:15px;color:#333333;transform:scaleX(1.1411)">Acrobat</span>
<span class="t" style="left:653.00px;top:55.00px;font-size:15px;color:#262626;font-weight:bold;transform:scaleX(1.0638)">Review</span>
<span class="t" style="left:1699.00px;top:55.00px;font-size:15px;color:#2b579a;font-weight:bold;transform:scaleX(1.0708)">Comments</span>
<span class="t" style="left:1834.00px;top:55.00px;font-size:15px;color:#2b579a;font-weight:bold;transform:scaleX(1.0071)">Share</span>
<span class="t" style="left:16.70px;top:134.00px;font-size:14.5px;color:#3a3a3a;transform:scaleX(1.0319)">Editor</span>
<span class="t" style="left:64.00px;top:134.00px;font-size:14.5px;color:#3a3a3a;transform:scaleX(1.0272)">Spelling and</span>
<span class="t" style="left:68.00px;top:154.00px;font-size:14.5px;color:#3a3a3a;transform:scaleX(1.0125)">Grammar</span>
<span class="t" style="left:152.00px;top:134.00px;font-size:14.5px;color:#3a3a3a;transform:scaleX(0.9487)">Thesaurus</span>
<span class="t" style="left:228.00px;top:134.00px;font-size:14.5px;color:#3a3a3a;transform:scaleX(1.0468)">Word</span>
<span class="t" style="left:226.00px;top:154.00px;font-size:14.5px;color:#3a3a3a;transform:scaleX(1.0077)">Count</span>
<span class="t" style="left:115.00px;top:184.00px;font-size:13px;color:#444444;transform:scaleX(1.0223)">Proofing</span>
<span class="t" style="left:90.60px;top:91.00px;font-size:17px;color:#555;transform:scaleX(1.0721)">abc</span>
<span class="t" style="left:240.00px;top:109.00px;font-size:17px;color:#1e8fd5;transform:scaleX(0.8458)">123</span>
<span class="t" style="left:301.00px;top:134.00px;font-size:14.5px;color:#3a3a3a;transform:scaleX(0.9518)">Read</span>
<span class="t" style="left:298.00px;top:154.00px;font-size:14.5px;color:#3a3a3a;transform:scaleX(1.0514)">Aloud</span>
<span class="t" style="left:296.00px;top:184.00px;font-size:13px;color:#444444;transform:scaleX(0.9298)">Speech</span>
<span class="t" style="left:394.00px;top:134.00px;font-size:14.5px;color:#3a3a3a;transform:scaleX(0.9487)">Check</span>
<span class="t" style="left:366.00px;top:154.00px;font-size:14.5px;color:#3a3a3a;transform:scaleX(1.0257)">Accessibility</span>
<span class="t" style="left:379.00px;top:184.00px;font-size:13px;color:#444444;transform:scaleX(0.9746)">Accessibility</span>
<span class="t" style="left:486.00px;top:134.00px;font-size:14.5px;color:#3a3a3a;transform:scaleX(0.9765)">Translate</span>
<span class="t" style="left:550.00px;top:134.00px;font-size:14.5px;color:#3a3a3a;transform:scaleX(1.0075)">Language</span>
<span class="t" style="left:522.00px;top:184.00px;font-size:13px;color:#444444;transform:scaleX(0.9681)">Language</span>
<span class="t" style="left:497.50px;top:108.00px;font-size:22px;color:#1a6fc9;transform:scaleX(1.1429)">a</span>
<span class="t" style="left:658.00px;top:134.00px;font-size:14.5px;color:#3a3a3a;transform:scaleX(1.0167)">New</span>
<span class="t" style="left:640.00px;top:154.00px;font-size:14.5px;color:#3a3a3a;transform:scaleX(1.0341)">Comment</span>
<span class="t" style="left:712.40px;top:134.00px;font-size:14.5px;color:#3a3a3a;transform:scaleX(1.0257)">Delete</span>
<span class="t" style="left:762.50px;top:134.00px;font-size:14.5px;color:#3a3a3a;transform:scaleX(0.9659)">Previous</span>
<span class="t" style="left:830.00px;top:134.00px;font-size:14.5px;color:#3a3a3a;transform:scaleX(1.0259)">Next</span>
<span class="t" style="left:899.40px;top:134.00px;font-size:14.5px;color:#a6a6a6;transform:scaleX(0.9812)">Show</span>
<span class="t" style="left:874.00px;top:154.00px;font-size:14.5px;color:#a6a6a6;transform:scaleX(1.0127)">Comments</span>
<span class="t" style="left:768.50px;top:184.00px;font-size:13px;color:#444444;transform:scaleX(0.9736)">Comments</span>
<span class="t" style="left:1003.00px;top:134.00px;font-size:14.5px;color:#3a3a3a;transform:scaleX(0.9379)">Track</span>
<span class="t" style="left:984.00px;top:154.00px;font-size:14.5px;color:#3a3a3a;transform:scaleX(0.9647)">Changes</span>
<span class="t" style="left:1075.00px;top:184.00px;font-size:13px;color:#444444;transform:scaleX(0.9641)">Tracking</span>
<span class="t" style="left:1088.60px;top:91.00px;font-size:15px;color:#222;transform:scaleX(0.9937)">No Markup</span>
<span class="t" style="left:1085.50px;top:119.00px;font-size:15px;color:#3a3a3a;transform:scaleX(0.9649)">Show Markup</span>
<span class="t" style="left:1085.50px;top:149.00px;font-size:15px;color:#3a3a3a;transform:scaleX(0.9409)">Reviewing Pane</span>
<span class="t" style="left:1260.00px;top:134.00px;font-size:14.5px;color:#3a3a3a;transform:scaleX(1.0283)">Accept</span>
<span class="t" style="left:1314.40px;top:134.00px;font-size:14.5px;color:#3a3a3a;transform:scaleX(0.9827)">Reject</span>
<span class="t" style="left:1389.40px;top:91.00px;font-size:15px;color:#3a3a3a;transform:scaleX(0.9356)">Previous</span>
<span class="t" style="left:1389.40px;top:120.00px;font-size:15px;color:#3a3a3a;transform:scaleX(0.9824)">Next</span>
<span class="t" style="left:1329.50px;top:184.00px;font-size:13px;color:#444444;transform:scaleX(0.9472)">Changes</span>
<span class="t" style="left:1475.30px;top:134.00px;font-size:14.5px;color:#3a3a3a;transform:scaleX(1.0127)">Compare</span>
<span class="t" style="left:1478.50px;top:184.00px;font-size:13px;color:#444444;transform:scaleX(0.9950)">Compare</span>
<span class="t" style="left:1576.40px;top:134.00px;font-size:14.5px;color:#a6a6a6;transform:scaleX(0.9981)">Block</span>
<span class="t" style="left:1561.00px;top:154.00px;font-size:14.5px;color:#a6a6a6;transform:scaleX(1.0163)">Authors</span>
<span class="t" style="left:1631.40px;top:134.00px;font-size:14.5px;color:#3a3a3a;transform:scaleX(0.9826)">Restrict</span>
<span class="t" style="left:1632.60px;top:154.00px;font-size:14.5px;color:#3a3a3a;transform:scaleX(1.0306)">Editing</span>
<span class="t" style="left:1600.40px;top:184.00px;font-size:13px;color:#444444;transform:scaleX(0.9857)">Protect</span>
<span class="t" style="left:1713.00px;top:134.00px;font-size:14.5px;color:#3a3a3a;transform:scaleX(1.0628)">Hide</span>
<span class="t" style="left:1712.50px;top:154.00px;font-size:14.5px;color:#3a3a3a;transform:scaleX(0.9771)">Ink</span>
<span class="t" style="left:1720.00px;top:184.00px;font-size:13px;color:#444444;transform:scaleX(0.9456)">Ink</span>
<span class="t" style="left:1779.00px;top:134.00px;font-size:14.5px;color:#3a3a3a;transform:scaleX(0.9828)">Linked</span>
<span class="t" style="left:1781.30px;top:154.00px;font-size:14.5px;color:#3a3a3a;transform:scaleX(1.0214)">Notes</span>
<span class="t" style="left:1774.40px;top:184.00px;font-size:13px;color:#444444;transform:scaleX(1.0010)">OneNote</span>
<span class="t" style="left:1785.50px;top:102.00px;font-size:14px;color:#fff;font-weight:bold;transform:scaleX(1.1852)">N</span>
<span class="t" style="left:15.60px;top:218.00px;font-size:26px;color:#333333;transform:scaleX(1.0288)">Navigation</span>
<span class="t" style="left:23.50px;top:272.00px;font-size:15px;color:#616161;transform:scaleX(0.9721)">Search document</span>
<span class="t" style="left:16.50px;top:319.00px;font-size:15px;color:#2b579a;font-weight:bold;transform:scaleX(0.9494)">Headings</span>
<span class="t" style="left:112.80px;top:319.00px;font-size:15px;color:#3a3a3a;transform:scaleX(0.8978)">Pages</span>
<span class="t" style="left:185.00px;top:319.00px;font-size:15px;color:#3a3a3a;transform:scaleX(0.9194)">Results</span>
<div style="position:absolute;left:0;top:352px;width:1920px;height:651px;overflow:hidden"><span class="t" style="left:41.00px;top:-7.00px;font-size:15px;color:#3a3a3a;transform:scaleX(0.8789)">7.</span></div>
<div style="position:absolute;left:0;top:352px;width:1920px;height:651px;overflow:hidden"><span class="t" style="left:60.00px;top:-7.00px;font-size:15px;color:#3a3a3a;transform:scaleX(0.9799)">Understanding risk (1)</span></div>
<span class="t" style="left:41.00px;top:372.00px;font-size:15px;color:#3a3a3a;transform:scaleX(0.8789)">8.</span>
<span class="t" style="left:60.00px;top:372.00px;font-size:15px;color:#3a3a3a;transform:scaleX(0.9799)">Understanding risk (2)</span>
<span class="t" style="left:41.00px;top:399.00px;font-size:15px;color:#3a3a3a;transform:scaleX(0.8789)">9.</span>
<span class="t" style="left:60.00px;top:399.00px;font-size:15px;color:#3a3a3a;transform:scaleX(0.9760)">Changes out of 100</span>
<span class="t" style="left:41.00px;top:426.00px;font-size:15px;color:#3a3a3a;transform:scaleX(0.9588)">10.</span>
<span class="t" style="left:68.00px;top:426.00px;font-size:15px;color:#3a3a3a;transform:scaleX(0.9743)">Changes out of 1000</span>
<span class="t" style="left:41.00px;top:453.00px;font-size:15px;color:#3a3a3a;transform:scaleX(1.0127)">11.</span>
<span class="t" style="left:68.00px;top:453.00px;font-size:15px;color:#3a3a3a;transform:scaleX(0.9742)">Comparing risks using these figures</span>
<span class="t" style="left:41.00px;top:480.00px;font-size:15px;color:#3a3a3a;transform:scaleX(0.9588)">12.</span>
<span class="t" style="left:68.00px;top:480.00px;font-size:15px;color:#3a3a3a;transform:scaleX(1.0079)">Choices about long-term impacts</span>
<span class="t" style="left:41.00px;top:507.00px;font-size:15px;color:#3a3a3a;transform:scaleX(0.9588)">13.</span>
<span class="t" style="left:68.00px;top:507.00px;font-size:15px;color:#3a3a3a;transform:scaleX(1.0015)">Remember your budget!</span>
<span class="t" style="left:41.00px;top:534.00px;font-size:15px;color:#3a3a3a;transform:scaleX(0.9588)">14.</span>
<span class="t" style="left:68.00px;top:534.00px;font-size:15px;color:#3a3a3a;transform:scaleX(0.9653)">Choice 1 (the risk)</span>
<span class="t" style="left:41.00px;top:561.00px;font-size:15px;color:#3a3a3a;transform:scaleX(0.9588)">15.</span>
<span class="t" style="left:68.00px;top:561.00px;font-size:15px;color:#3a3a3a;transform:scaleX(0.9827)">Choice 1b (the choice)</span>
<span class="t" style="left:41.00px;top:588.00px;font-size:15px;color:#3a3a3a;transform:scaleX(0.9588)">16.</span>
<span class="t" style="left:68.00px;top:588.00px;font-size:15px;color:#3a3a3a;transform:scaleX(0.9827)">Choice 1b (the choice)</span>
<span class="t" style="left:41.00px;top:615.00px;font-size:15px;color:#3a3a3a;transform:scaleX(0.9588)">17.</span>
<span class="t" style="left:68.00px;top:615.00px;font-size:15px;color:#3a3a3a;transform:scaleX(0.9653)">Choice 2 (the risk)</span>
<span class="t" style="left:41.00px;top:642.00px;font-size:15px;color:#3a3a3a;transform:scaleX(0.9588)">18.</span>
<span class="t" style="left:68.00px;top:642.00px;font-size:15px;color:#3a3a3a;transform:scaleX(0.9827)">Choice 2b (the choice)</span>
<span class="t" style="left:41.00px;top:669.00px;font-size:15px;color:#3a3a3a;transform:scaleX(0.9588)">19.</span>
<span class="t" style="left:68.00px;top:669.00px;font-size:15px;color:#3a3a3a;transform:scaleX(0.9891)">An alternative way to rate illness severity</span>
<span class="t" style="left:41.00px;top:696.00px;font-size:15px;color:#3a3a3a;transform:scaleX(0.9588)">20.</span>
<span class="t" style="left:68.00px;top:696.00px;font-size:15px;color:#3a3a3a;transform:scaleX(0.9878)">Rating your current health</span>
<span class="t" style="left:41.00px;top:723.00px;font-size:15px;color:#3a3a3a;transform:scaleX(0.9588)">21.</span>
<span class="t" style="left:68.00px;top:723.00px;font-size:15px;color:#3a3a3a;transform:scaleX(0.9653)">Choice 3 (the risk)</span>
<span class="t" style="left:41.00px;top:750.00px;font-size:15px;color:#3a3a3a;transform:scaleX(0.9588)">22.</span>
<span class="t" style="left:68.00px;top:750.00px;font-size:15px;color:#3a3a3a;transform:scaleX(0.9827)">Choice 3b (the choice)</span>
<span class="t" style="left:41.00px;top:777.00px;font-size:15px;color:#3a3a3a;transform:scaleX(0.9588)">23.</span>
<span class="t" style="left:68.00px;top:777.00px;font-size:15px;color:#3a3a3a;transform:scaleX(0.9653)">Choice 4 (the risk)</span>
<span class="t" style="left:41.00px;top:804.00px;font-size:15px;color:#3a3a3a;transform:scaleX(0.9588)">24.</span>
<span class="t" style="left:68.00px;top:804.00px;font-size:15px;color:#3a3a3a;transform:scaleX(0.9827)">Choice 4b (the choice)</span>
<span class="t" style="left:41.00px;top:831.00px;font-size:15px;color:#3a3a3a;transform:scaleX(0.9588)">25.</span>
<span class="t" style="left:68.00px;top:831.00px;font-size:15px;color:#3a3a3a;transform:scaleX(0.9740)">Questions about your survey experience</span>
<span class="t" style="left:41.00px;top:858.00px;font-size:15px;color:#3a3a3a;transform:scaleX(0.9588)">26.</span>
<span class="t" style="left:68.00px;top:858.00px;font-size:15px;color:#3a3a3a;transform:scaleX(0.9773)">General health questions</span>
<span class="t" style="left:41.00px;top:885.00px;font-size:15px;color:#3a3a3a;transform:scaleX(0.9588)">27.</span>
<span class="t" style="left:68.00px;top:885.00px;font-size:15px;color:#3a3a3a;transform:scaleX(0.9923)">Other background questions</span>
<span class="t" style="left:41.00px;top:912.00px;font-size:15px;color:#3a3a3a;transform:scaleX(0.9588)">28.</span>
<span class="t" style="left:68.00px;top:912.00px;font-size:15px;color:#3a3a3a;transform:scaleX(0.9884)">Other background questions (2)</span>
<span class="t" style="left:41.00px;top:939.00px;font-size:15px;color:#3a3a3a;transform:scaleX(0.9588)">29.</span>
<span class="t" style="left:68.00px;top:939.00px;font-size:15px;color:#3a3a3a;transform:scaleX(0.9884)">Other background questions (3)</span>
<span class="t" style="left:41.00px;top:966.00px;font-size:15px;color:#3a3a3a;transform:scaleX(0.9588)">30.</span>
<span class="t" style="left:68.00px;top:966.00px;font-size:15px;color:#3a3a3a;transform:scaleX(0.9884)">Other background questions (4)</span>
<span class="t" style="left:1342.40px;top:284.00px;font-size:12px;color:#7f7f7f;transform:scaleX(1.0101)">OMB Control Number:</span>
<span class="t" style="left:1079.00px;top:328.00px;font-size:18px;color:#000000;font-weight:bold;transform:scaleX(0.9205)">22.  Choice 3b (the choice)</span>
<span class="t" style="left:1039.50px;top:377.00px;font-size:12.5px;color:#000000;font-weight:bold;transform:scaleX(0.9176)">You become ill with food poisoning and</span>
<span class="t" style="left:1091.00px;top:393.00px;font-size:12.5px;color:#000000;font-weight:bold;transform:scaleX(0.9220)">afterward experience a long-</span>
<span class="t" style="left:1109.60px;top:409.00px;font-size:12.5px;color:#000000;font-weight:bold;transform:scaleX(0.9421)">term health outcome.</span>
<span class="t" style="left:1311.90px;top:377.00px;font-size:12.5px;color:#000000;font-weight:bold;transform:scaleX(0.9282)">You become ill with food</span>
<span class="t" style="left:1289.70px;top:393.00px;font-size:12.5px;color:#000000;font-weight:bold;transform:scaleX(0.9163)">poisoning, but do not experience</span>
<span class="t" style="left:1300.80px;top:409.00px;font-size:12.5px;color:#000000;font-weight:bold;transform:scaleX(0.9377)">a long-term health-outcome.</span>
<span class="t" style="left:1058.75px;top:459.00px;font-size:12.5px;color:#000000;transform:scaleX(0.9739)">Mobility: I have some problems in</span>
<span class="t" style="left:1058.75px;top:475.00px;font-size:12.5px;color:#000000;transform:scaleX(0.9649)">moving around.</span>
<span class="t" style="left:1058.75px;top:507.00px;font-size:12.5px;color:#000000;transform:scaleX(0.9400)">Self-Care: Unable to wash or dress</span>
<span class="t" style="left:1058.75px;top:539.00px;font-size:12.5px;color:#000000;transform:scaleX(0.9558)">Usual Activities: Some problems</span>
<span class="t" style="left:1058.75px;top:555.00px;font-size:12.5px;color:#000000;transform:scaleX(0.9753)">performing usual activities</span>
<span class="t" style="left:1058.75px;top:587.00px;font-size:12.5px;color:#000000;transform:scaleX(0.9754)">Pain or Discomfort: Moderate pain</span>
<span class="t" style="left:1058.75px;top:603.00px;font-size:12.5px;color:#000000;transform:scaleX(0.9945)">or discomfort</span>
<span class="t" style="left:1058.75px;top:635.00px;font-size:12.5px;color:#000000;transform:scaleX(0.9615)">Anxiety &amp; Depression: I am not</span>
<span class="t" style="left:1058.75px;top:652.00px;font-size:12.5px;color:#000000;transform:scaleX(0.9412)">anxious or depressed</span>
<span class="t" style="left:1295.00px;top:459.00px;font-size:12.5px;color:#000000;transform:scaleX(1.0027)">Mobility: your current level</span>
<span class="t" style="left:1295.00px;top:507.00px;font-size:12.5px;color:#000000;transform:scaleX(0.9650)">Self-care: your current level</span>
<span class="t" style="left:1295.00px;top:539.00px;font-size:12.5px;color:#000000;transform:scaleX(0.9732)">Usual activities: your current</span>
<span class="t" style="left:1295.00px;top:555.00px;font-size:12.5px;color:#000000;transform:scaleX(0.9332)">level</span>
<span class="t" style="left:1295.00px;top:587.00px;font-size:12.5px;color:#000000;transform:scaleX(0.9806)">Pain or discomfort: your current</span>
<span class="t" style="left:1295.00px;top:603.00px;font-size:12.5px;color:#000000;transform:scaleX(0.9332)">level</span>
<span class="t" style="left:1295.00px;top:635.00px;font-size:12.5px;color:#000000;transform:scaleX(0.9684)">Anxiety &amp; depression: your</span>
<span class="t" style="left:1295.00px;top:652.00px;font-size:12.5px;color:#000000;transform:scaleX(0.9825)">current level</span>
<span class="t" style="left:910.30px;top:508.00px;font-size:12.5px;color:#000000;transform:scaleX(0.9838)">What you would</span>
<span class="t" style="left:910.30px;top:524.00px;font-size:12.5px;color:#000000;transform:scaleX(0.9435)">experience</span>
<span class="t" style="left:910.30px;top:685.00px;font-size:12.5px;color:#000000;transform:scaleX(0.9860)">Duration of</span>
<span class="t" style="left:910.30px;top:701.00px;font-size:12.5px;color:#000000;transform:scaleX(0.9476)">chronic illness</span>
<span class="t" style="left:910.30px;top:717.00px;font-size:12.5px;color:#000000;transform:scaleX(0.9213)">Chance of</span>
<span class="t" style="left:910.30px;top:733.00px;font-size:12.5px;color:#000000;transform:scaleX(0.9562)">experiencing this</span>
<span class="t" style="left:910.30px;top:749.00px;font-size:12.5px;color:#000000;transform:scaleX(0.9841)">outcome in the</span>
<span class="t" style="left:910.30px;top:765.00px;font-size:12.5px;color:#000000;transform:scaleX(0.9355)">next 5 years</span>
<span class="t" style="left:910.30px;top:783.00px;font-size:12.5px;color:#000000;transform:scaleX(0.9665)">Extra expenditure</span>
<span class="t" style="left:910.30px;top:799.00px;font-size:12.5px;color:#000000;transform:scaleX(0.9564)">each year for next</span>
<span class="t" style="left:910.30px;top:815.00px;font-size:12.5px;color:#000000;transform:scaleX(0.9073)">5 years</span>
<span class="t" style="left:910.30px;top:849.00px;font-size:12.5px;color:#000000;transform:scaleX(0.9737)">Which one would</span>
<span class="t" style="left:910.30px;top:865.00px;font-size:12.5px;color:#000000;transform:scaleX(0.9352)">you choose?</span>
<span class="t" style="left:1126.00px;top:685.00px;font-size:12.5px;color:#000000;transform:scaleX(0.9176)">10 years</span>
<span class="t" style="left:1361.00px;top:685.00px;font-size:12.5px;color:#000000;transform:scaleX(0.9207)">0 years</span>
<span class="t" style="left:1108.75px;top:717.00px;font-size:12.5px;color:#000000;transform:scaleX(0.9776)">31 out of 1000</span>
<span class="t" style="left:1377.00px;top:717.00px;font-size:12.5px;color:#000000;transform:scaleX(0.8629)">0</span>
<span class="t" style="left:1095.30px;top:783.00px;font-size:12.5px;color:#000000;transform:scaleX(0.9387)">$0 ($0 over 5 years)</span>
<span class="t" style="left:1308.75px;top:783.00px;font-size:12.5px;color:#000000;transform:scaleX(0.9477)">$220 ($1,100 over 5 years)</span>
<span class="t" style="left:10.00px;top:1010.00px;font-size:14px;color:#444444;transform:scaleX(0.9290)">Page 27 of 39</span>
<span class="t" style="left:115.00px;top:1010.00px;font-size:14px;color:#444444;transform:scaleX(0.9324)">4443 words</span>
<span class="t" style="left:251.00px;top:1010.00px;font-size:14px;color:#444444;transform:scaleX(0.9219)">Text Predictions: On</span>
<span class="t" style="left:451.00px;top:1010.00px;font-size:14px;color:#444444;transform:scaleX(0.9062)">Accessibility: Investigate</span>
<span class="t" style="left:1500.00px;top:1010.00px;font-size:14px;color:#444444;transform:scaleX(0.8525)">Focus</span>
<span class="t" style="left:1877.50px;top:1010.00px;font-size:14px;color:#444444;transform:scaleX(0.8919)">72%</span>
<span class="t" style="left:110.75px;top:1046.00px;font-size:19px;color:#262626;transform:scaleX(0.9676)">Type here to search</span>
<span class="t" style="left:748.00px;top:1051.00px;font-size:11px;color:#fff;font-weight:bold;transform:scaleX(1.1549)">W</span>
<span class="t" style="left:812.50px;top:1051.00px;font-size:11px;color:#fff;font-weight:bold;transform:scaleX(1.2255)">X</span>
<span class="t" style="left:874.50px;top:1050.00px;font-size:11px;color:#fff;font-weight:bold;transform:scaleX(1.3364)">T</span>
<span class="t" style="left:889.50px;top:1060.00px;font-size:10px;color:#fff;font-weight:bold;transform:scaleX(1.1836)">9+</span>
<span class="t" style="left:936.00px;top:1050.00px;font-size:11px;color:#fff;font-weight:bold;transform:scaleX(1.1679)">O</span>
<span class="t" style="left:1592.00px;top:1047.00px;font-size:19px;color:#fff;transform:scaleX(0.8971)">50°F  Sunny</span>
<span class="t" style="left:1786.00px;top:1036.00px;font-size:15px;color:#fff;transform:scaleX(0.9217)">3:23 PM</span>
<span class="t" style="left:1778.00px;top:1060.00px;font-size:15px;color:#fff;transform:scaleX(1.0115)">3/20/2023</span>
</body></html>
